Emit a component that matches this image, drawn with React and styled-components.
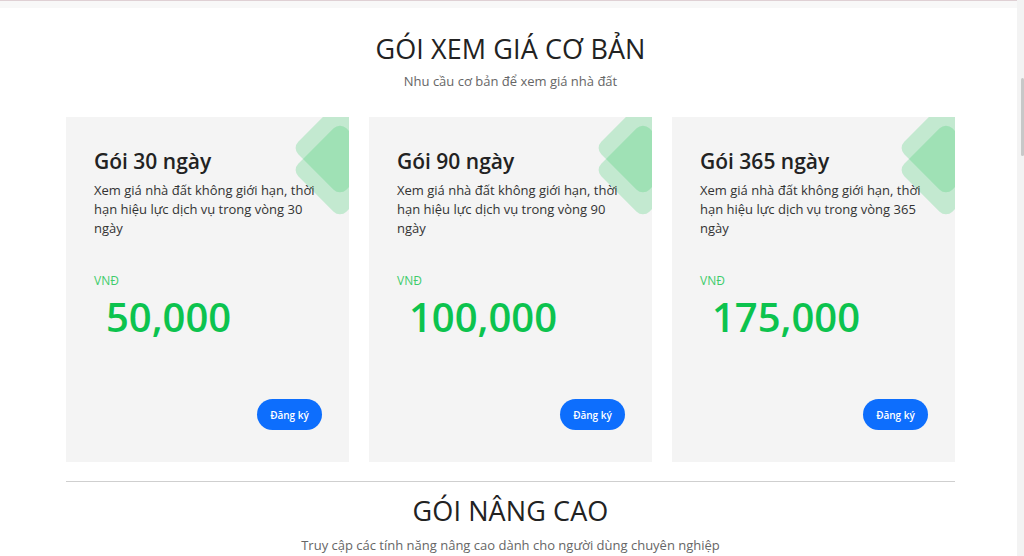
import React from 'react';
import styled, { createGlobalStyle } from 'styled-components';

const GlobalStyle = createGlobalStyle`
  html, body {
    margin: 0;
    padding: 0;
    background: #ffffff;
    overflow: hidden;
  }
  body {
    font-family: "Open Sans", "Noto Sans", Arial, sans-serif;
    color: #222;
  }
`;

const plans = [
  { id: 1, title: 'Gói 30 ngày', days: 30, price: '50,000' },
  { id: 2, title: 'Gói 90 ngày', days: 90, price: '100,000' },
  { id: 3, title: 'Gói 365 ngày', days: 365, price: '175,000' },
];

const Page = styled.div`
  width: calc(100% - 3px);
  min-height: 556px;
`;

const TopStrip = styled.div`
  height: 8px;
  background: #f8f8f8;
  border-top: 1px solid #dfd0d4;
  box-sizing: border-box;
`;

const Section = styled.section`
  display: flex;
  flex-direction: column;
  align-items: center;
  padding-top: ${p => p.$top || 0}px;
`;

const Heading = styled.h2`
  margin: 0;
  font-size: 27px;
  line-height: 32px;
  font-weight: 400;
  color: #222;
  letter-spacing: 0.1px;
`;

const Sub = styled.p`
  margin: ${p => p.$gap || 7}px 0 0;
  font-size: 13px;
  line-height: 19px;
  color: #666;
`;

const CardRow = styled.div`
  display: grid;
  grid-template-columns: repeat(3, 283px);
  gap: 20px;
  margin-top: 26px;
`;

const Card = styled.div`
  position: relative;
  overflow: hidden;
  height: 345px;
  box-sizing: border-box;
  background: #f4f4f4;
  padding: 32px 27px 32px 28px;
  display: flex;
  flex-direction: column;
`;

const Deco = styled.span`
  position: absolute;
  left: 240px;
  top: ${p => p.$top}px;
  width: 68px;
  height: 68px;
  border-radius: 9px;
  background: rgba(64, 204, 110, 0.27);
  transform: rotate(45deg);
`;

const Title = styled.h3`
  position: relative;
  margin: 0;
  font-size: 21px;
  line-height: 25px;
  font-weight: 600;
  color: #222;
`;

const Desc = styled.p`
  position: relative;
  margin: 7px 0 0;
  max-width: 228px;
  font-size: 13px;
  line-height: 19px;
  color: #333;
`;

const Currency = styled.div`
  margin-top: 35px;
  font-size: 12px;
  line-height: 16px;
  color: #3fcc6c;
`;

const Price = styled.div`
  margin-top: 4px;
  padding-left: 12px;
  font-size: 40px;
  line-height: 48px;
  font-weight: 600;
  color: #0cc34e;
`;

const Footer = styled.div`
  margin-top: auto;
  display: flex;
  justify-content: flex-end;
`;

const Button = styled.button`
  width: 65px;
  height: 31px;
  border: 0;
  border-radius: 16px;
  background: #0d6efd;
  color: #fff;
  font-family: inherit;
  font-size: 10px;
  font-weight: 600;
  cursor: pointer;
`;

const Divider = styled.hr`
  width: 889px;
  margin: 19px 0 0;
  border: 0;
  border-top: 1px solid #cfcfcf;
`;

const ScrollTrack = styled.div`
  position: fixed;
  top: 0;
  right: 0;
  width: 7px;
  height: 100%;
  background: #f3f3f3;
`;

const ScrollThumb = styled.div`
  position: absolute;
  right: 0;
  top: 78px;
  width: 3px;
  height: 78px;
  border-radius: 2px;
  background: #c8c8c8;
`;

const PlanCard = ({ plan }) => (
  <Card>
    <Deco $top={-3} />
    <Deco $top={19} />
    <Title>{plan.title}</Title>
    <Desc>
      Xem giá nhà đất không giới hạn, thời hạn hiệu lực dịch vụ trong vòng {plan.days} ngày
    </Desc>
    <Currency>VNĐ</Currency>
    <Price>{plan.price}</Price>
    <Footer>
      <Button>Đăng ký</Button>
    </Footer>
  </Card>
);

export default function App() {
  return (
    <>
      <GlobalStyle />
      <Page>
        <TopStrip />
        <Section $top={25}>
          <Heading>GÓI XEM GIÁ CƠ BẢN</Heading>
          <Sub>Nhu cầu cơ bản để xem giá nhà đất</Sub>
          <CardRow>
            {plans.map(plan => <PlanCard key={plan.id} plan={plan} />)}
          </CardRow>
          <Divider />
        </Section>
        <Section $top={13}>
          <Heading>GÓI NÂNG CAO</Heading>
          <Sub $gap={9}>Truy cập các tính năng nâng cao dành cho người dùng chuyên nghiệp</Sub>
        </Section>
      </Page>
      <ScrollTrack>
        <ScrollThumb />
      </ScrollTrack>
    </>
  );
}
